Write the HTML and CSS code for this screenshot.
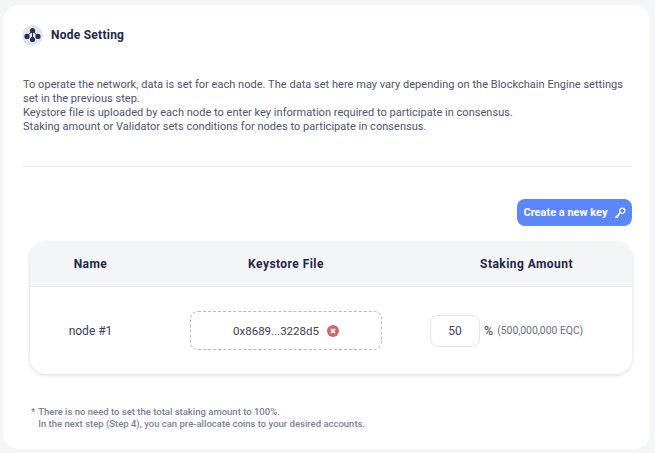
FILE: index.html
```html
<!DOCTYPE html>
<html lang="en">
<head>
<meta charset="utf-8">
<title>Node Setting</title>
<link rel="stylesheet" href="styles.css">
</head>
<body>
<main class="card">
  <header class="head">
    <span class="head-icon">
      <svg width="21" height="21" viewBox="0 0 21 21"><g fill="#2b2f52"><circle cx="10.5" cy="5.6" r="2.6"/><circle cx="5" cy="11.4" r="2.6"/><circle cx="16" cy="11.4" r="2.6"/><circle cx="10.5" cy="14.6" r="2.6"/></g><path d="M10.5 5.6 5 11.4M10.5 5.6 16 11.4M10.5 5.6V14.6" stroke="#2b2f52" stroke-width="1" fill="none"/></svg>
    </span>
    <h1 class="title">Node Setting</h1>
  </header>
  <p class="desc">To operate the network, data is set for each node. The data set here may vary depending on the Blockchain Engine settings set in the previous step.<br>Keystore file is uploaded by each node to enter key information required to participate in consensus.<br>Staking amount or Validator sets conditions for nodes to participate in consensus.</p>
  <hr class="rule">
  <div class="actions">
    <button class="btn" type="button">Create a new key
      <svg width="12" height="12" viewBox="0 0 12 12" fill="none" stroke="#fff" stroke-width="1.3"><circle cx="8.2" cy="3.8" r="2.6"/><path d="M6.3 5.7 1.2 10.8M2.4 9.6l1.3 1.3M3.9 8.1l1.1 1.1"/></svg>
    </button>
  </div>
  <section class="table">
    <div class="row row-head">
      <div class="c-name">Name</div>
      <div class="c-file">Keystore File</div>
      <div class="c-stake">Staking Amount</div>
    </div>
    <div class="row row-body">
      <div class="c-name">node #1</div>
      <div class="c-file">
        <div class="drop">
          <span>0x8689...3228d5</span>
          <svg width="12" height="12" viewBox="0 0 12 12"><circle cx="6" cy="6" r="6" fill="#c9686c"/><path d="M3.9 3.9l4.2 4.2M8.1 3.9 3.9 8.1" stroke="#fff" stroke-width="1.6"/></svg>
        </div>
      </div>
      <div class="c-stake stake">
        <span class="amount">50</span>
        <span class="pct">%</span>
        <span class="eqc">(500,000,000 EQC)</span>
      </div>
    </div>
  </section>
  <div class="note">
    <span class="star">*</span>
    <p>There is no need to set the total staking amount to 100%.<br>In the next step (Step 4), you can pre-allocate coins to your desired accounts.</p>
  </div>
</main>
</body>
</html>
```
FILE: styles.css
```css
* { box-sizing: border-box; }
html, body { margin: 0; height: 100%; }
body {
  background: #f4f5f7;
  padding: 5px 5px 4px 3px;
  font-family: Roboto, "Liberation Sans", sans-serif;
  color: #2b2f52;
  overflow: hidden;
}
.card {
  background: #fff;
  border-radius: 16px;
  height: 444px;
  padding: 18px 18px 0 19px;
}
.head { display: flex; align-items: center; gap: 8px; height: 24px; }
.head-icon {
  width: 21px; height: 21px; border-radius: 50%;
  background: #e4e5ec;
  display: flex;
}
.title { margin: 0; font-size: 12px; font-weight: 700; letter-spacing: 0.25px; color: #23274a; }
.desc {
  margin: 31px 0 0 1px;
  font-size: 11px;
  letter-spacing: 0.03px;
  line-height: 14px;
  color: #4f5370;
}
.rule { margin: 32px 0 0; border: 0; border-top: 1px solid #e6e7ec; }
.actions { display: flex; justify-content: flex-end; margin-top: 32px; }
.btn {
  display: flex; align-items: center; gap: 6px;
  height: 27px; width: 115px; justify-content: center;
  border: 0; border-radius: 8px;
  background: #5b87fb; color: #fff;
  font: 700 11px Roboto, sans-serif;
}
.table {
  margin: 16px 0 0 8px;
  width: 602px;
  height: 132px;
  border-radius: 16px;
  background: #fff;
  box-shadow: 0 1px 4px rgba(60, 70, 110, 0.2);
  overflow: hidden;
}
.row { display: flex; align-items: center; }
.row-head {
  height: 45px;
  background: #f4f5f7;
  border-bottom: 1px solid #e8e9ee;
  font-size: 12px; font-weight: 700;
  letter-spacing: 0.45px;
  color: #23274a;
}
.row-body { height: 87px; font-size: 12px; color: #3c4060; }
.c-name { width: 121px; text-align: center; }
.c-file { width: 270px; display: flex; justify-content: center; }
.c-stake { flex: 1; text-align: center; }
.drop {
  width: 192px; height: 39px;
  border: 1px dashed #b9b9bd;
  border-radius: 8px;
  display: flex; align-items: center; justify-content: center; gap: 8px;
  font-size: 11.5px;
  letter-spacing: 0;
}
.stake { display: flex; align-items: center; padding-left: 9px; }
.amount {
  width: 50px; height: 32px;
  border: 1px solid #e6e7ec; border-radius: 8px;
  display: flex; align-items: center; justify-content: center;
  font-size: 12px;
}
.pct { margin-left: 4px; font-size: 12.5px; }
.eqc { margin-left: 4px; font-size: 10.4px; color: #6a6e88; }
.note {
  display: flex; gap: 3px;
  margin: 32px 0 0 9px;
  font-size: 9.5px; font-weight: 500;
  line-height: 12px;
  color: #7d8097;
}
.note p { margin: 0; }
```
